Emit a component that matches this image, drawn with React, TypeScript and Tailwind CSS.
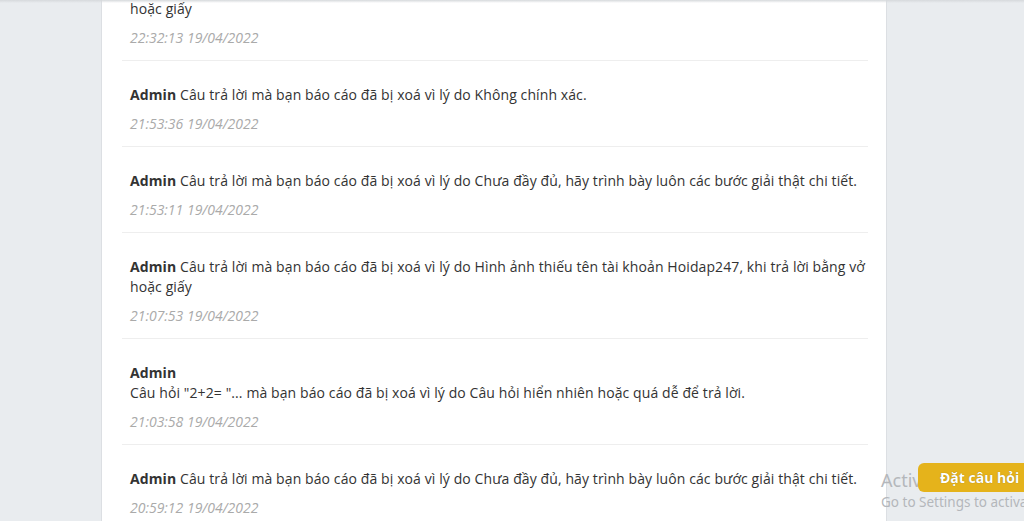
const notices = [
  {
    inline: true,
    text: "Câu trả lời mà bạn báo cáo đã bị xoá vì lý do Hình ảnh thiếu tên tài khoản Hoidap247, khi trả lời bằng vở hoặc giấy",
    time: "22:32:13 19/04/2022",
  },
  {
    inline: true,
    text: "Câu trả lời mà bạn báo cáo đã bị xoá vì lý do Không chính xác.",
    time: "21:53:36 19/04/2022",
  },
  {
    inline: true,
    text: "Câu trả lời mà bạn báo cáo đã bị xoá vì lý do Chưa đầy đủ, hãy trình bày luôn các bước giải thật chi tiết.",
    time: "21:53:11 19/04/2022",
  },
  {
    inline: true,
    text: "Câu trả lời mà bạn báo cáo đã bị xoá vì lý do Hình ảnh thiếu tên tài khoản Hoidap247, khi trả lời bằng vở hoặc giấy",
    time: "21:07:53 19/04/2022",
  },
  {
    inline: false,
    text: 'Câu hỏi "2+2= "... mà bạn báo cáo đã bị xoá vì lý do Câu hỏi hiển nhiên hoặc quá dễ để trả lời.',
    time: "21:03:58 19/04/2022",
  },
  {
    inline: true,
    text: "Câu trả lời mà bạn báo cáo đã bị xoá vì lý do Chưa đầy đủ, hãy trình bày luôn các bước giải thật chi tiết.",
    time: "20:59:12 19/04/2022",
  },
  {
    inline: true,
    text: "Câu trả lời mà bạn báo cáo đã bị xoá vì lý do Không chính xác.",
    time: "20:41:05 19/04/2022",
  },
];

function NoticeItem({ inline, text, time }: { inline: boolean; text: string; time: string }) {
  return (
    <li className="border-b border-[#eeeeee] pt-6 pr-0 pb-3 pl-2">
      <p className="text-[14px] leading-5 tracking-[0.1px] text-[#333]">
        <b className="font-bold">Admin</b>
        {inline ? " " : <br />}
        {text}
      </p>
      <p className="mt-[9px] text-[14px] leading-5 italic text-[#aaaaaa]">{time}</p>
    </li>
  );
}

export default function App() {
  return (
    <div
      className="relative h-[521px] w-[1024px] overflow-hidden bg-[#e9ecef]"
      style={{ fontFamily: '"Open Sans", "Noto Sans", sans-serif' }}
    >
      <div className="ml-[101px] flow-root h-full w-[786px] border-x border-[#dcdfe3] bg-white">
        {/* page is scrolled: list starts above the viewport */}
        <ul className="mt-[-45px] mr-[18px] ml-5">
          {notices.map((n, i) => (
            <NoticeItem key={i} {...n} />
          ))}
        </ul>
      </div>

      {/* header shadow */}
      <div className="absolute inset-x-0 top-0 h-[3px] bg-gradient-to-b from-[#d6d9dc] to-transparent" />

      {/* windows watermark */}
      <div
        className="pointer-events-none absolute left-[881px] top-[468px] whitespace-nowrap text-[#b4b7bb]"
        style={{ fontFamily: '"Noto Sans", "Open Sans", sans-serif' }}
      >
        <div className="text-[18px] leading-6">Activate Windows</div>
        <div className="text-[13.5px] leading-5">Go to Settings to activate Windows.</div>
      </div>

      <button className="absolute left-[918px] top-[463px] flex h-[29px] w-[120px] items-center rounded-l-md bg-[#e5b31b] pl-[22px] text-[14px] font-bold text-white [text-shadow:0_0_1px_#8a6a10]">
        Đặt câu hỏi
      </button>
    </div>
  );
}
